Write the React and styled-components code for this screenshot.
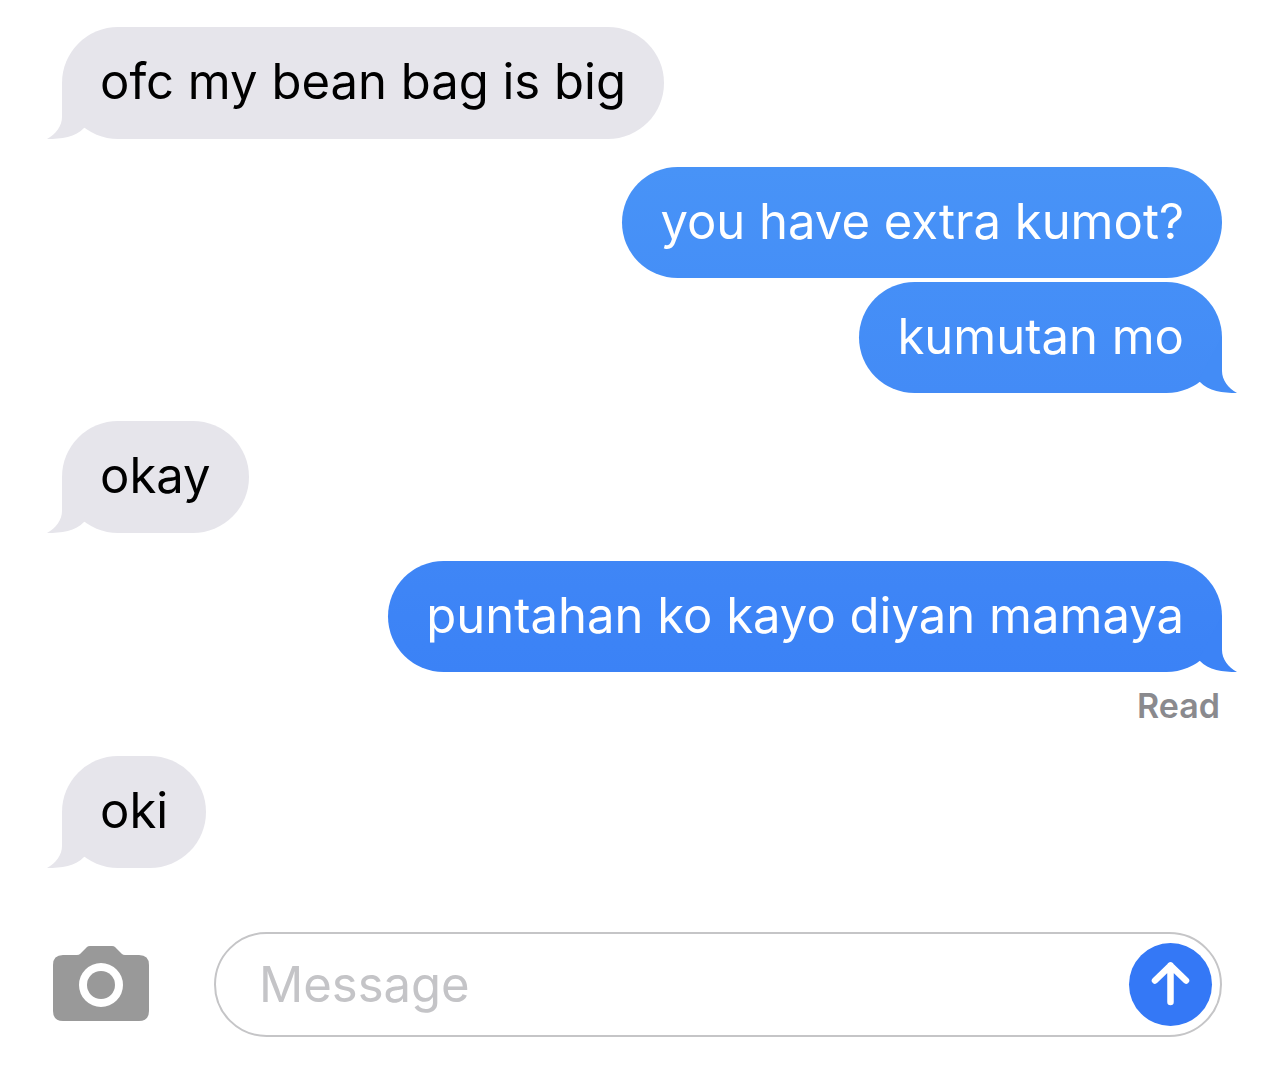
import React from "react";
import styled, { createGlobalStyle } from "styled-components";

const GlobalStyle = createGlobalStyle`
  * { box-sizing: border-box; }
  body { margin: 0; background: #fff; }
`;

const Screen = styled.main`
  display: flex;
  flex-direction: column;
  padding: 27px 62px 32px;
  font-family: Inter, "Liberation Sans", sans-serif;
  color: #000;
`;

const Thread = styled.section`
  display: flex;
  flex-direction: column;
  gap: 28px;
`;

const Group = styled.div`
  display: flex;
  flex-direction: column;
  align-items: ${(p) => (p.$sent ? "flex-end" : "flex-start")};
  gap: 4px;
`;

const Bubble = styled.p`
  position: relative;
  margin: 0;
  padding: ${(p) => (p.$fill ? "25px 38px 26px" : "25px 38px 27px")};
  border-radius: 56px;
  font-size: 49px;
  line-height: 60px;
  color: ${(p) => (p.$fill ? "#fff" : "#000")};
  background: ${(p) => p.$fill || "#e6e5eb"};
`;

const TailShape = styled.svg`
  position: absolute;
  bottom: 0;
  ${(p) => (p.$sent ? "right: -16px; transform: scaleX(-1);" : "left: -16px;")}
  width: 40px;
  height: 56px;
`;

const Receipt = styled.span`
  padding: 10px 2px 2px 0;
  font-size: 34px;
  font-weight: 600;
  line-height: 40px;
  color: #8a8a8e;
`;

const Composer = styled.form`
  display: flex;
  align-items: center;
  gap: 65px;
  margin: 64px 0 0 -9px;
`;

const CameraButton = styled.button`
  display: flex;
  padding: 0;
  border: 0;
  background: none;
`;

const Field = styled.div`
  display: flex;
  flex: 1;
  align-items: center;
  height: 105px;
  padding: 0 8px 0 43px;
  border: 2px solid #c5c5c7;
  border-radius: 53px;
`;

const MessageInput = styled.input`
  flex: 1;
  min-width: 0;
  padding: 0;
  border: 0;
  outline: 0;
  background: none;
  font-family: inherit;
  font-size: 49px;
  line-height: 60px;
  &::placeholder { color: #c4c4c7; opacity: 1; }
`;

const SendButton = styled.button`
  display: grid;
  place-items: center;
  width: 83px;
  height: 83px;
  padding: 0;
  border: 0;
  border-radius: 50%;
  background: #3478f6;
`;

function Message({ fill, tail, children }) {
  return (
    <Bubble $fill={fill}>
      {tail && (
        <TailShape $sent={!!fill} viewBox="0 0 40 56" aria-hidden="true">
          <path fill={tail} d="M16 0V34C16 43 10 51 1 56C15 56 30 54 38 45L40 44Z" />
        </TailShape>
      )}
      {children}
    </Bubble>
  );
}

export default function App() {
  return (
    <Screen>
      <GlobalStyle />
      <Thread>
        <Group>
          <Message tail="#e6e5eb">ofc my bean bag is big</Message>
        </Group>
        <Group $sent>
          <Message fill="linear-gradient(#4893f7, #458ff7)">you have extra kumot?</Message>
          <Message fill="linear-gradient(#458ff7, #438bf6)" tail="#438cf6">kumutan mo</Message>
        </Group>
        <Group>
          <Message tail="#e6e5eb">okay</Message>
        </Group>
        <Group $sent>
          <Message fill="linear-gradient(#3f86f6, #3b82f6)" tail="#3c83f6">puntahan ko kayo diyan mamaya</Message>
          <Receipt>Read</Receipt>
        </Group>
        <Group>
          <Message tail="#e6e5eb">oki</Message>
        </Group>
      </Thread>
      <Composer onSubmit={(e) => e.preventDefault()}>
        <CameraButton type="button" aria-label="Take a photo">
          <svg width="96" height="77" viewBox="0 0 96 77" aria-hidden="true">
            <path fill="#999" fillRule="evenodd" d="M10 9H24Q26 9 27 8L34 1Q35 0 37 0H59Q61 0 62 1L69 8Q70 9 72 9H86Q96 9 96 19V65Q96 75 86 75H10Q0 75 0 65V19Q0 9 10 9ZM48 17A22 22 0 1 0 48 61A22 22 0 1 0 48 17Z" />
            <circle cx="48" cy="39" r="14" fill="#999" />
          </svg>
        </CameraButton>
        <Field>
          <MessageInput type="text" aria-label="Message" placeholder="Message" />
          <SendButton type="submit" aria-label="Send">
            <svg width="41" height="47" viewBox="0 0 41 47" aria-hidden="true">
              <path d="M20.500 41V4.500M5 19.500L20.500 4.500L36 19.500" fill="none" stroke="#fff" strokeWidth="6.500" strokeLinecap="round" strokeLinejoin="round" />
            </svg>
          </SendButton>
        </Field>
      </Composer>
    </Screen>
  );
}
